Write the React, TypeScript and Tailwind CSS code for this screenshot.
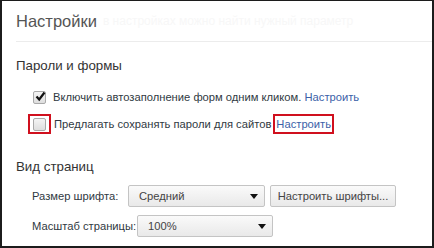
import React from 'react';

function Checkbox({ checked }: { checked?: boolean }) {
  return (
    <span className="relative flex h-[13px] w-[13px] items-center justify-center rounded-[2px] border border-[#a9a9a9] bg-gradient-to-b from-[#f4f4f4] to-[#dedede]">
      {checked && (
        <svg width="11" height="11" viewBox="0 0 11 11" className="absolute left-[1px] top-[-1px]">
          <path d="M1.5 5.5 L4.2 8.5 L9.5 1.5" fill="none" stroke="#111" strokeWidth="2.2" />
        </svg>
      )}
    </span>
  );
}

function Select({ value, width }: { value: string; width: string }) {
  return (
    <div
      className={`flex h-[22px] items-center justify-between rounded-[2px] border border-[#c4c4c4] bg-gradient-to-b from-[#fafafa] to-[#e9e9e9] pl-[10px] pr-[6px] text-[#444] ${width}`}
    >
      <span>{value}</span>
      <svg width="8" height="5" viewBox="0 0 8 5">
        <path d="M0 0 H8 L4 5 Z" fill="#111" />
      </svg>
    </div>
  );
}

export default function App() {
  return (
    <div
      className="h-[248px] w-[434px] overflow-hidden whitespace-nowrap border-2 border-t border-[#1c1c1c] bg-white text-[11.2px] text-[#303942]"
      style={{ fontFamily: '"Liberation Sans", Arial, sans-serif' }}
    >
      <div className="pl-[14px]">
        <div className="flex h-[33px] items-end gap-[6px] pb-[1px]">
          <h1 className="text-[16.5px] leading-[24px] text-[#555]">Настройки</h1>
          <span className="pb-[3px] text-[12px] text-[#f7f7f7]">в настройках можно найти нужный параметр</span>
        </div>
        <div className="mt-[7px] h-px bg-[#ececec]" />

        <h2 className="mt-[15px] text-[13.3px] leading-[18px] text-[#333]">Пароли и формы</h2>

        <div className="mt-[12px] flex h-[20px] items-center pl-[17px]">
          <Checkbox checked />
          <span className="ml-[7px]">
            Включить автозаполнение форм одним кликом. <span className="text-[#3b5fa8]">Настроить</span>
          </span>
        </div>

        <div className="mt-[7px] flex h-[20px] items-center pl-[12px]">
          <span className="flex h-[20px] w-[23px] items-center justify-center border-2 border-[#d0101e]">
            <Checkbox />
          </span>
          <span className="ml-[3px]">Предлагать сохранять пароли для сайтов</span>
          <span className="ml-[2px] flex h-[20px] items-center border-2 border-[#d0101e] px-[1px] text-[#3b5fa8]">
            Настроить
          </span>
        </div>

        <h2 className="mt-[24px] text-[13.3px] leading-[18px] text-[#333]">Вид страниц</h2>

        <div className="mt-[9px] flex items-center pl-[16px]">
          <span className="w-[96px]">Размер шрифта:</span>
          <Select value="Средний" width="w-[137px]" />
          <button className="ml-[5px] h-[22px] w-[126px] rounded-[2px] border border-[#c4c4c4] bg-gradient-to-b from-[#fafafa] to-[#e9e9e9] text-[#444]">
            Настроить шрифты...
          </button>
        </div>

        <div className="mt-[8px] flex items-center pl-[16px]">
          <span className="w-[105px]">Масштаб страницы:</span>
          <Select value="100%" width="w-[136px]" />
        </div>
      </div>
    </div>
  );
}
